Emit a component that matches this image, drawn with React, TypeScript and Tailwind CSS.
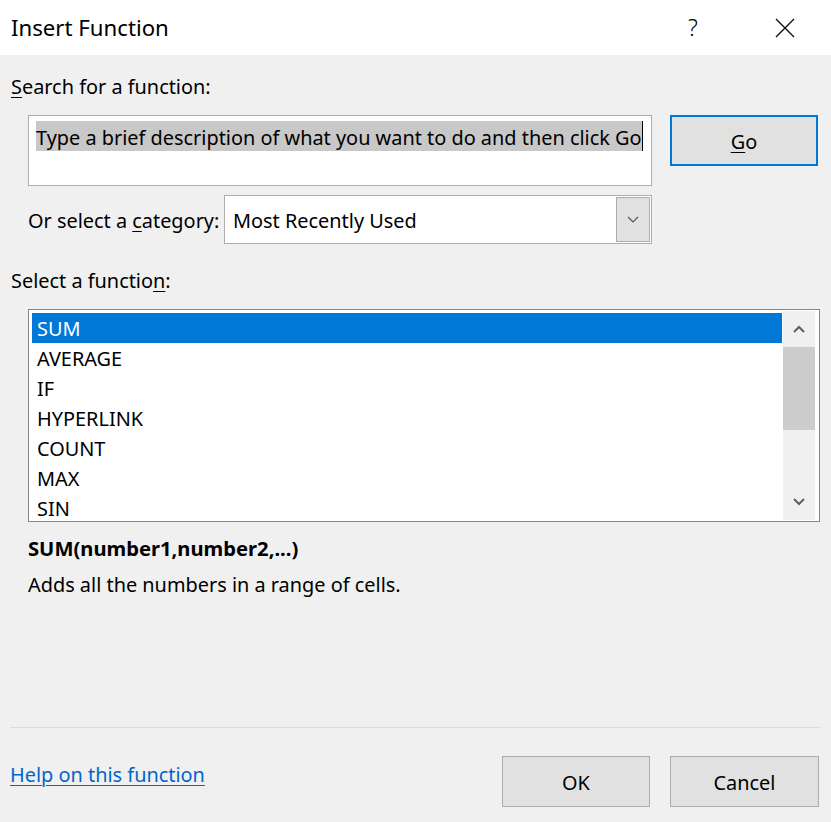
import { useState } from 'react';

const FONT = "font-['Noto_Sans',_'Open_Sans',_sans-serif]";

const functions = ['SUM', 'AVERAGE', 'IF', 'HYPERLINK', 'COUNT', 'MAX', 'SIN'];

function Chevron({ up, className }: { up?: boolean; className?: string }) {
  return (
    <svg width="12" height="8" viewBox="0 0 12 8" className={className}>
      <path
        d={up ? 'M1 7 L6 2 L11 7' : 'M1 1 L6 6 L11 1'}
        fill="none"
        stroke="#606060"
        strokeWidth="2"
      />
    </svg>
  );
}

function Key({ children }: { children: string }) {
  return <span className="underline decoration-1 underline-offset-[3px]">{children}</span>;
}

export default function App() {
  const [selected, setSelected] = useState(0);

  return (
    <div className={`w-[831px] h-[822px] bg-[#f0f0f0] flex flex-col text-black text-[19.9px] ${FONT}`}>
      {/* Title bar */}
      <div className="h-[55px] bg-white flex items-center pl-[11px] shrink-0">
        <span className="text-[22.2px]">Insert Function</span>
        <span className="ml-auto text-[23px] font-light w-[20px] text-center">?</span>
        <svg width="20" height="20" viewBox="0 0 20 20" className="ml-[72px] mr-[36px]">
          <path d="M1 1 L19 19 M19 1 L1 19" stroke="#111" strokeWidth="1.4" />
        </svg>
      </div>

      <div className="mt-[21px] h-[22px] leading-[22px] pl-[11px]">
        <Key>S</Key>earch for a function:
      </div>

      {/* Search row */}
      <div className="mt-[17px] flex items-start pl-[28px]">
        <div className="w-[624px] h-[71px] border border-[#adadad] bg-white pt-[5px] pl-[7px] flex items-start">
          <span className="bg-[#c8c8c8] h-[30px] pt-[3px] leading-[27px] whitespace-nowrap">
            Type a brief description of what you want to do and then click Go
          </span>
          <span className="w-px h-[30px] bg-black" />
        </div>
        <button className="ml-[18px] w-[148px] h-[51px] pt-[3px] border-2 border-[#0078d7] bg-[#e1e1e1] flex items-center justify-center">
          <span>
            <Key>G</Key>o
          </span>
        </button>
      </div>

      {/* Category row */}
      <div className="mt-[9px] flex items-center pl-[28px] h-[49px]">
        <span className="w-[196px] shrink-0 pt-[2px] whitespace-nowrap">
          Or select a <Key>c</Key>ategory:
        </span>
        <div className="w-[428px] h-[49px] border border-[#adadad] bg-white flex items-center pl-[8px]">
          <span className="pt-[2px]">Most Recently Used</span>
          <div className="ml-auto mr-px w-[34px] h-[45px] border border-[#adadad] bg-[#e1e1e1] flex items-center justify-center">
            <svg width="12" height="7" viewBox="0 0 12 7">
              <path d="M1 1 L6 6 L11 1" fill="none" stroke="#555" strokeWidth="1.2" />
            </svg>
          </div>
        </div>
      </div>

      <div className="mt-[26px] h-[22px] leading-[22px] pl-[11px]">
        Select a functio<Key>n</Key>:
      </div>

      {/* Function list */}
      <div className="mt-[17px] ml-[28px] w-[792px] h-[213px] border border-[#828790] bg-white flex shrink-0">
        <div className="w-[754px] pl-[3px] pr-px pt-[3px] overflow-hidden">
          {functions.map((fn, i) => (
            <div
              key={fn}
              onClick={() => setSelected(i)}
              className={`h-[30px] pt-[2px] leading-[28px] pl-[5px] ${
                i === selected ? 'bg-[#0078d7] text-white' : ''
              }`}
            >
              {fn}
            </div>
          ))}
        </div>
        <div className="w-[32px] my-px bg-[#f0f0f0] flex flex-col">
          <div className="h-[36px] flex items-center justify-center">
            <Chevron up />
          </div>
          <div className="h-[83px] bg-[#cdcdcd]" />
          <div className="flex-1" />
          <div className="h-[36px] flex items-center justify-center">
            <Chevron />
          </div>
        </div>
      </div>

      <div className="mt-[15px] h-[22px] leading-[22px] pl-[28px] font-bold text-[20.2px]">
        SUM(number1,number2,...)
      </div>
      <div className="mt-[15px] h-[22px] leading-[22px] pl-[28px]">
        Adds all the numbers in a range of cells.
      </div>

      <div className="flex-1" />

      {/* Footer */}
      <div className="h-[95px] shrink-0 flex flex-col">
        <div className="mx-[10px] border-t border-[#dcdcdc]" />
        <div className="mt-[28px] flex items-start pl-[10px] pr-[12px]">
          <a href="#" className="mt-[8px] h-[22px] leading-[22px] text-[#0066cc] underline decoration-1 underline-offset-[3px]">
            Help on this function
          </a>
          <button className="ml-auto w-[148px] h-[51px] pt-[3px] border border-[#adadad] bg-[#e1e1e1]">
            OK
          </button>
          <button className="ml-[20px] w-[149px] h-[51px] pt-[3px] border border-[#adadad] bg-[#e1e1e1]">
            Cancel
          </button>
        </div>
      </div>
    </div>
  );
}
